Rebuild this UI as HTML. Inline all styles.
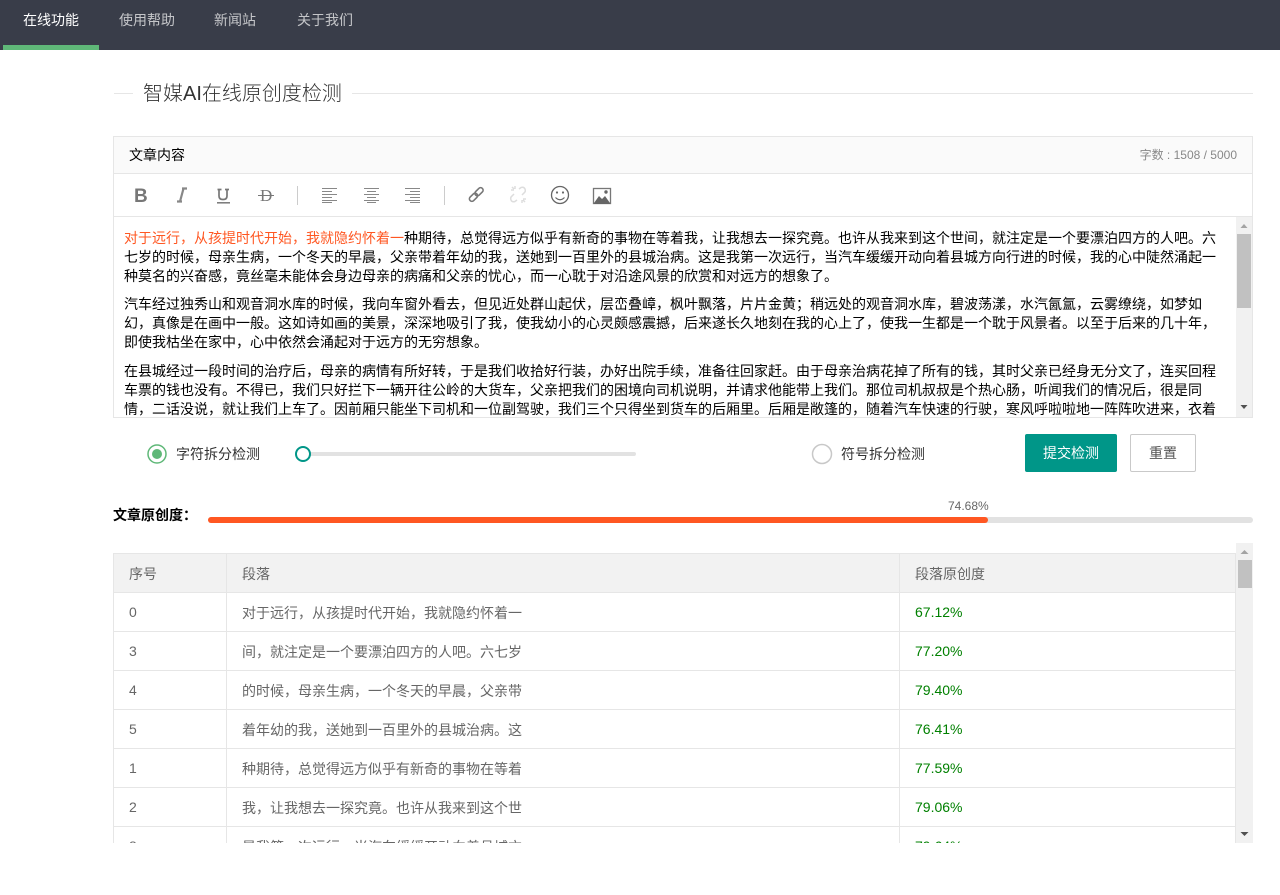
<!DOCTYPE html>
<html lang="zh-CN">
<head>
<meta charset="utf-8">
<title>智媒AI在线原创度检测</title>
<style>
html,body{margin:0;padding:0;background:#fff;}
body{width:1280px;height:895px;overflow:hidden;position:relative;font-family:"Liberation Sans","Noto Sans CJK SC",sans-serif;font-size:14px;color:#666;}
.a{position:absolute;white-space:nowrap;}
.nav{left:0;top:0;width:1280px;height:50px;background:#393d49;}
.nt{top:10px;line-height:20px;color:rgba(255,255,255,.7);}
.l{left:0;line-height:19px;color:#000;white-space:nowrap;position:absolute;}
.box{border:1px solid #e6e6e6;box-sizing:border-box;}
.h{position:absolute;background:#e6e6e6;height:1px;}
.v{position:absolute;background:#e6e6e6;width:1px;}
.t{line-height:20px;color:#666;}
.c{line-height:20px;color:#666;margin-top:1px;}
.g{color:#008000;}
</style>
</head>
<body>
<div class="a nav"></div>
<div class="a" style="left:3px;top:45px;width:96px;height:5px;background:#5fb878"></div>
<div class="a nt" style="left:23px;color:#fff">在线功能</div>
<div class="a nt" style="left:119px">使用帮助</div>
<div class="a nt" style="left:214px">新闻站</div>
<div class="a nt" style="left:297px">关于我们</div>

<div class="a" style="left:114px;top:93px;width:19px;height:1px;background:#e6e6e6"></div>
<div class="a" style="left:352px;top:93px;width:901px;height:1px;background:#e6e6e6"></div>
<div class="a" style="left:143px;top:79px;font-size:20px;line-height:30px;color:#333;font-weight:300">智媒AI在线原创度检测</div>

<div class="a box" style="left:113px;top:136px;width:1140px;height:282px"></div>
<div class="a" style="left:114px;top:137px;width:1138px;height:36px;background:#fafafa"></div>
<div class="h" style="left:114px;top:173px;width:1138px"></div>
<div class="h" style="left:114px;top:216px;width:1138px"></div>
<div class="a" style="left:129px;top:145px;line-height:20px;color:#000">文章内容</div>
<div class="a" style="right:43px;top:145px;line-height:20px;font-size:12px;color:#888">字数 : 1508 / 5000</div>

<svg class="a" style="left:0;top:0" width="1280" height="230" viewBox="0 0 1280 230" fill="none">
  <text x="134" y="202" font-family="Liberation Sans" font-weight="bold" font-size="19" fill="#777">B</text>
  <path d="M180 201.500l3.500-13M177 201.500h5M182 188.500h5" stroke="#888" stroke-width="2.200"/>
  <path d="M219 189v7q0 3.500 4 3.500t4-3.500v-7M217.500 189.500h4M225 189.500h4" stroke="#777" stroke-width="1.700"/>
  <path d="M217 202.800h13" stroke="#777" stroke-width="1.500"/>
  <text x="260" y="201" font-family="Liberation Serif" font-size="17" fill="#777">D</text>
  <path d="M258 195.500h16" stroke="#777" stroke-width="1"/>
  <path d="M297.500 186v19M444.500 186v19" stroke="#ccc" stroke-width="1"/>
  <path d="M322 188.500h15M322 191.500h10M322 194.500h15M322 197.500h10M322 200.500h15M322 202.500h10" stroke="#888"/>
  <path d="M364 188.500h15M367 191.500h9M364 194.500h15M367 197.500h9M364 200.500h15M367 202.500h9" stroke="#888"/>
  <path d="M405 188.500h15M410 191.500h10M405 194.500h15M410 197.500h10M405 200.500h15M410 202.500h10" stroke="#888"/>
  <g stroke="#777" stroke-width="1.600" fill="none">
    <rect x="476.500" y="187" width="5" height="9.500" rx="2.500" transform="rotate(45 479 191.750)"/>
    <rect x="471" y="192.500" width="5" height="9.500" rx="2.500" transform="rotate(45 473.500 197.250)"/>
  </g>
  <g stroke="#ddd" stroke-width="1.500" fill="none">
    <path d="M519 189l2-1.500q3-1 4 1.500t-1 4l-2 2"/>
    <path d="M517 200l-2 1.500q-3 1-4-1.500t1-4l2-2"/>
    <path d="M515 186v3M511 190h3M522 203v-3M526 199h-3M512 187l2 2M525 202l-2-2"/>
  </g>
  <circle cx="560" cy="195" r="8.500" stroke="#666" stroke-width="1.300"/>
  <circle cx="557" cy="192.500" r="1.100" fill="#666"/>
  <circle cx="563" cy="192.500" r="1.100" fill="#666"/>
  <path d="M555.500 197.500q4.500 4.500 9 0" stroke="#666" stroke-width="1.200"/>
  <rect x="593.500" y="188.500" width="17" height="15" stroke="#777" stroke-width="1.300"/>
  <path d="M594 203l5-7 3 3 3-3 5 7z" fill="#666"/>
  <path d="M594 203h16v1h-16z" fill="#666"/>
  <circle cx="606" cy="192" r="1.700" fill="#666"/>
</svg>

<div class="a" style="left:114px;top:217px;width:1122px;height:200px;overflow:hidden;font-size:14px">
  <div class="l" style="left:10px;top:12px"><span style="color:#ff5722">对于远行，从孩提时代开始，我就隐约怀着一</span>种期待，总觉得远方似乎有新奇的事物在等着我，让我想去一探究竟。也许从我来到这个世间，就注定是一个要漂泊四方的人吧。六</div>
  <div class="l" style="left:10px;top:31px">七岁的时候，母亲生病，一个冬天的早晨，父亲带着年幼的我，送她到一百里外的县城治病。这是我第一次远行，当汽车缓缓开动向着县城方向行进的时候，我的心中陡然涌起一</div>
  <div class="l" style="left:10px;top:50px">种莫名的兴奋感，竟丝毫未能体会身边母亲的病痛和父亲的忧心，而一心耽于对沿途风景的欣赏和对远方的想象了。</div>
  <div class="l" style="left:10px;top:78px">汽车经过独秀山和观音洞水库的时候，我向车窗外看去，但见近处群山起伏，层峦叠嶂，枫叶飘落，片片金黄；稍远处的观音洞水库，碧波荡漾，水汽氤氲，云雾缭绕，如梦如</div>
  <div class="l" style="left:10px;top:97px">幻，真像是在画中一般。这如诗如画的美景，深深地吸引了我，使我幼小的心灵颇感震撼，后来遂长久地刻在我的心上了，使我一生都是一个耽于风景者。以至于后来的几十年，</div>
  <div class="l" style="left:10px;top:116px">即使我枯坐在家中，心中依然会涌起对于远方的无穷想象。</div>
  <div class="l" style="left:10px;top:145px">在县城经过一段时间的治疗后，母亲的病情有所好转，于是我们收拾好行装，办好出院手续，准备往回家赶。由于母亲治病花掉了所有的钱，其时父亲已经身无分文了，连买回程</div>
  <div class="l" style="left:10px;top:164px">车票的钱也没有。不得已，我们只好拦下一辆开往公岭的大货车，父亲把我们的困境向司机说明，并请求他能带上我们。那位司机叔叔是个热心肠，听闻我们的情况后，很是同</div>
  <div class="l" style="left:10px;top:183px">情，二话没说，就让我们上车了。因前厢只能坐下司机和一位副驾驶，我们三个只得坐到货车的后厢里。后厢是敞篷的，随着汽车快速的行驶，寒风呼啦啦地一阵阵吹进来，衣着</div>
</div>
<div class="a" style="left:1236px;top:217px;width:16px;height:200px;background:#f1f1f1"></div>
<div class="a" style="left:1237px;top:234px;width:14px;height:74px;background:#c1c1c1"></div>
<svg class="a" style="left:1236px;top:217px" width="16" height="200"><path d="M4.500 11l3.500-4 3.500 4z" fill="#a3a3a3"/><path d="M4.500 188h7l-3.500 4z" fill="#505050"/></svg>

<svg class="a" style="left:140px;top:440px" width="200" height="30" fill="none">
  <circle cx="17" cy="14" r="9" stroke="#5fb878" stroke-width="1.500"/>
  <circle cx="17" cy="14" r="5" fill="#5fb878"/>
</svg>
<div class="a" style="left:176px;top:444px;line-height:20px;color:#333">字符拆分检测</div>
<div class="a" style="left:303px;top:452px;width:333px;height:4px;background:#e2e2e2;border-radius:2px"></div>
<div class="a" style="left:295px;top:446px;width:12px;height:12px;border:2px solid #009688;border-radius:50%;background:#fff"></div>
<svg class="a" style="left:800px;top:440px" width="44" height="30" fill="none">
  <circle cx="22" cy="14" r="9.500" stroke="#c8c8c8" stroke-width="1.500"/>
</svg>
<div class="a" style="left:841px;top:444px;line-height:20px;color:#333">符号拆分检测</div>
<div class="a" style="left:1025px;top:434px;width:92px;height:38px;line-height:38px;background:#009688;color:#fff;text-align:center;border-radius:2px">提交检测</div>
<div class="a" style="left:1130px;top:434px;width:66px;height:38px;line-height:36px;box-sizing:border-box;border:1px solid #c9c9c9;color:#555;text-align:center;border-radius:2px">重置</div>

<div class="a" style="left:113px;top:505px;line-height:20px;font-size:14px;font-weight:bold;color:#000">文章原创度：</div>
<div class="a" style="left:208px;top:517px;width:1045px;height:6px;background:#e2e2e2;border-radius:3px"></div>
<div class="a" style="left:208px;top:517px;width:780px;height:6px;background:#ff5722;border-radius:3px"></div>
<div class="a" style="left:948px;top:498px;line-height:16px;font-size:12px;color:#666">74.68%</div>

<div class="a" style="left:113px;top:543px;width:1140px;height:300px;overflow:hidden">
  <div class="a" style="left:0;top:10px;width:1123px;height:39px;background:#f2f2f2"></div>
  <div class="h" style="left:0;top:10px;width:1123px"></div>
  <div class="h" style="left:0;top:49px;width:1123px"></div>
  <div class="h" style="left:0;top:88px;width:1123px"></div>
  <div class="h" style="left:0;top:127px;width:1123px"></div>
  <div class="h" style="left:0;top:166px;width:1123px"></div>
  <div class="h" style="left:0;top:205px;width:1123px"></div>
  <div class="h" style="left:0;top:244px;width:1123px"></div>
  <div class="h" style="left:0;top:283px;width:1123px"></div>
  <div class="v" style="left:0;top:10px;height:290px"></div>
  <div class="v" style="left:113px;top:10px;height:290px"></div>
  <div class="v" style="left:786px;top:10px;height:290px"></div>
  <div class="v" style="left:1122px;top:10px;height:290px"></div>

  <div class="a c" style="left:16px;top:20px">序号</div><div class="a c" style="left:129px;top:20px">段落</div><div class="a c" style="left:802px;top:20px">段落原创度</div>
  <div class="a t" style="left:16px;top:59px">0</div><div class="a c" style="left:129px;top:59px">对于远行，从孩提时代开始，我就隐约怀着一</div><div class="a t g" style="left:802px;top:59px">67.12%</div>
  <div class="a t" style="left:16px;top:98px">3</div><div class="a c" style="left:129px;top:98px">间，就注定是一个要漂泊四方的人吧。六七岁</div><div class="a t g" style="left:802px;top:98px">77.20%</div>
  <div class="a t" style="left:16px;top:137px">4</div><div class="a c" style="left:129px;top:137px">的时候，母亲生病，一个冬天的早晨，父亲带</div><div class="a t g" style="left:802px;top:137px">79.40%</div>
  <div class="a t" style="left:16px;top:176px">5</div><div class="a c" style="left:129px;top:176px">着年幼的我，送她到一百里外的县城治病。这</div><div class="a t g" style="left:802px;top:176px">76.41%</div>
  <div class="a t" style="left:16px;top:215px">1</div><div class="a c" style="left:129px;top:215px">种期待，总觉得远方似乎有新奇的事物在等着</div><div class="a t g" style="left:802px;top:215px">77.59%</div>
  <div class="a t" style="left:16px;top:254px">2</div><div class="a c" style="left:129px;top:254px">我，让我想去一探究竟。也许从我来到这个世</div><div class="a t g" style="left:802px;top:254px">79.06%</div>
  <div class="a t" style="left:16px;top:293px">8</div><div class="a c" style="left:129px;top:293px">是我第一次远行，当汽车缓缓开动向着县城方</div><div class="a t g" style="left:802px;top:293px">79.64%</div>

  <div class="a" style="left:1123px;top:0;width:17px;height:300px;background:#f1f1f1"></div>
  <div class="a" style="left:1125px;top:17px;width:14px;height:28px;background:#c1c1c1"></div>
  <svg class="a" style="left:1123px;top:0" width="17" height="300"><path d="M4.500 11l4-4 4 4z" fill="#a3a3a3"/><path d="M4.500 289h8l-4 4z" fill="#505050"/></svg>
</div>
</body>
</html>
